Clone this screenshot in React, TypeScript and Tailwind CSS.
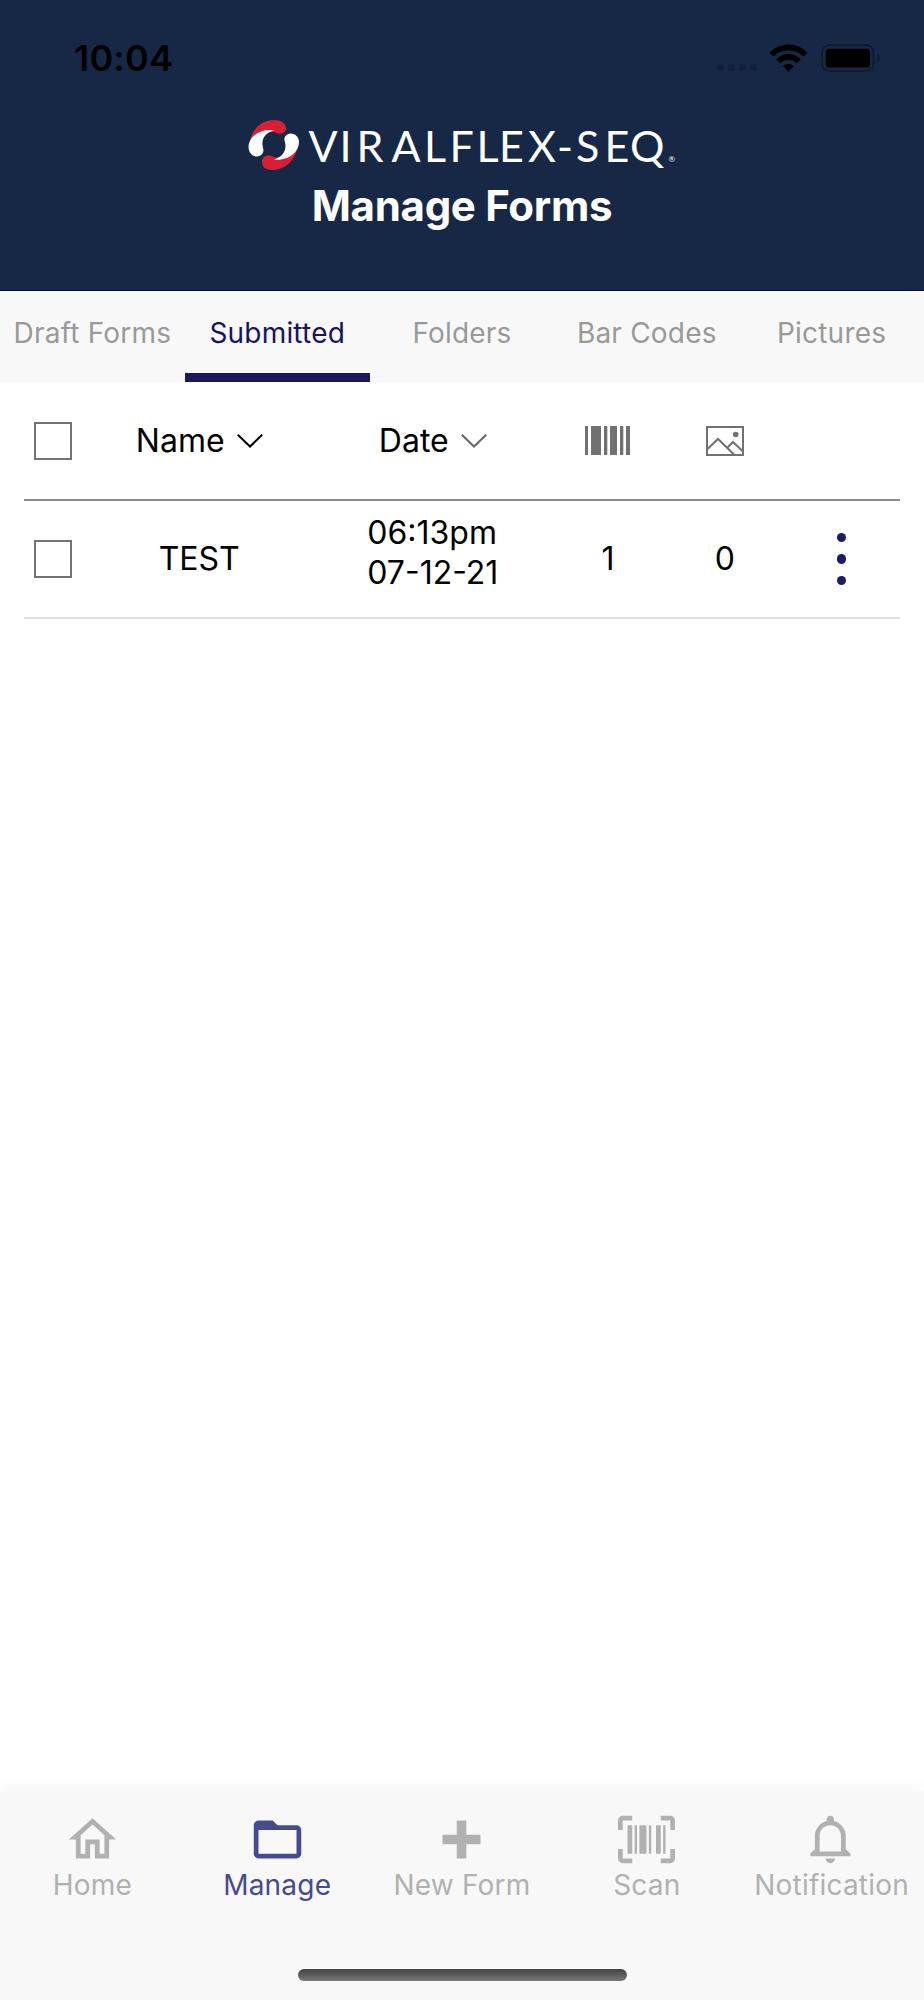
import type { ReactNode } from 'react';

const tabs = ['Draft Forms', 'Submitted', 'Folders', 'Bar Codes', 'Pictures'];
const activeTab = 'Submitted';

const forms = [{ name: 'TEST', time: '06:13pm', date: '07-12-21', barcodes: 1, pictures: 0 }];

const navItems = [
  {
    label: 'Home',
    path: 'M12 5.69l5 4.5V18h-2v-6H9v6H7v-7.81l5-4.5M12 3L2 12h3v8h6v-6h2v6h6v-8h3L12 3z',
  },
  {
    label: 'Manage',
    path: 'M20,18H4V8H20M20,6H12L10,4H4C2.89,4 2,4.89 2,6V18A2,2 0 0,0 4,20H20A2,2 0 0,0 22,18V8C22,6.89 21.1,6 20,6Z',
  },
  { label: 'New Form', path: 'M20 14H14V20H10V14H4V10H10V4H14V10H20V14Z' },
  {
    label: 'Scan',
    path: 'M4,6H6V18H4V6M7,6H8V18H7V6M9,6H12V18H9V6M13,6H14V18H13V6M16,6H18V18H16V6M19,6H20V18H19V6M2,4V8H0V4A2,2 0 0,1 2,2H6V4H2M22,2A2,2 0 0,1 24,4V8H22V4H18V2H22M2,16V20H6V22H2A2,2 0 0,1 0,20V16H2M22,20V16H24V20A2,2 0 0,1 22,22H18V20H22Z',
  },
  {
    label: 'Notification',
    path: 'M16,17H7V10.5C7,8 9,6 11.5,6C14,6 16,8 16,10.5M18,16V10.5C18,7.43 15.86,4.86 13,4.18V3.5A1.5,1.5 0 0,0 11.5,2A1.5,1.5 0 0,0 10,3.5V4.18C7.13,4.86 5,7.43 5,10.5V16L3,18V19H20V18M11.5,22A2,2 0 0,0 13.5,20H9.5A2,2 0 0,0 11.5,22Z',
  },
];
const activeNav = 'Manage';

function StatusBar() {
  return (
    <div className="flex h-[116px] items-center justify-between pr-[43px] pl-[74px] text-black">
      <span className="text-[36px] font-semibold tracking-[0.2px]">10:04</span>
      <div className="flex items-center">
        <div className="mt-[19px] mr-[12px] flex gap-[4px]">
          <span className="size-[7px] rounded-[3px] bg-[#12203b]" />
          <span className="size-[7px] rounded-[3px] bg-[#12203b]" />
          <span className="size-[7px] rounded-[3px] bg-[#12203b]" />
          <span className="size-[7px] rounded-[3px] bg-[#12203b]" />
        </div>
        <svg className="mr-[13px] h-[28px] w-[39px]" viewBox="0 0 39 28" fill="currentColor">
          <path d="M0.5 8.7C11 -2.2 28 -2.2 38.5 8.7L34.4 12.5C26 4.2 13 4.2 4.6 12.5Z" />
          <path d="M7.2 15.3C14 8.3 25 8.3 31.8 15.3L27.7 19.2C23 14.8 16 14.8 11.3 19.2Z" />
          <path d="M14 22C17 19.2 22 19.2 25 22L19.5 27.8Z" />
        </svg>
        <svg className="h-[28px] w-[60px]" viewBox="0 0 60 28">
          <rect x="1" y="1" width="51.5" height="26" rx="7.5" fill="none" stroke="#0f1b31" strokeWidth="2" />
          <rect x="4.7" y="4.8" width="44.3" height="18.8" rx="3" fill="#000" />
          <path d="M56 10C60 11 60 17 56 18Z" fill="#0f1b31" />
        </svg>
      </div>
    </div>
  );
}

function Logo() {
  return (
    <svg className="h-[52px] w-[430px]" viewBox="247 119 430 52">
      <path
        d="M250 143C251 129 262 120 274 120C281 120 286 123 286 128C286 134 279 135 274 132C265 131 256 135 250 143Z"
        fill="#d91f35"
      />
      <path
        d="M297 147C296 160 285 170 272 170C266 170 262 167 262 162C262 156 268 154 274 157C283 159 291 156 297 147Z"
        fill="#d91f35"
      />
      <path
        d="M274 130.5C264 128 249 134 248.5 147C248.5 152 252 156.500 257 156.500C262 156.500 264.500 152 263 148C261 140 264 133 274 130.500Z"
        fill="#fff"
      />
      <path
        d="M274 159.500C285 161 298.500 155 299 142C299 137 295 133.500 291 133.500C286 133.500 283 138 285 142C287 150 283 157 274 159.500Z"
        fill="#fff"
      />
      <text
        x="308.500 339.500 356.500 391.500 424 449.500 476.500 499 528 557 576 604.500 630"
        y="162.300"
        className="font-[Lato] text-[43px]"
        fill="#fff"
      >
        VIRALFLEX-SEQ
      </text>
      <text x="668.500" y="162" className="font-[Lato] text-[8px]" fill="#fff">
        ®
      </text>
    </svg>
  );
}

function ChevronIcon({ className }: { className: string }) {
  return (
    <svg className={className} width="26" height="14" viewBox="0 0 26 14" fill="none" stroke="currentColor" strokeWidth="2">
      <path d="M0.8 0.8L13 12.5L25.200 0.8" />
    </svg>
  );
}

function BarcodeIcon() {
  return (
    <svg width="45" height="29" viewBox="0 0 45 29" fill="#717171">
      <rect width="3" height="29" />
      <rect x="6" width="10" height="29" />
      <rect x="19" width="3.300" height="29" />
      <rect x="25" width="7" height="29" />
      <rect x="35" width="3.300" height="29" />
      <rect x="41" width="4" height="29" />
    </svg>
  );
}

function PictureIcon() {
  return (
    <svg width="38" height="30" viewBox="0 0 38 30" fill="none" stroke="#717171" strokeWidth="2">
      <rect x="1" y="1" width="36" height="28" />
      <path d="M1 23.500L12 13L28 28.500M21.500 21.500L27 16L37 25.500" />
      <circle cx="29.700" cy="8.500" r="2.800" fill="#717171" stroke="none" />
    </svg>
  );
}

function Checkbox() {
  return <span className="size-[38px] border-2 border-[#737373] bg-white" />;
}

function Row({ className, children }: { className: string; children: ReactNode }) {
  return (
    <div className={`grid grid-cols-[1fr_4fr_4fr_2fr_2fr_2fr] items-center justify-items-center ${className}`}>
      {children}
    </div>
  );
}

export default function App() {
  return (
    <div className="flex h-[2000px] w-[924px] flex-col overflow-hidden bg-white font-[Inter,sans-serif] text-black">
      <header className="h-[291px] shrink-0 border-b border-[#0b0b45] bg-[#172846]">
        <StatusBar />
        <div className="flex flex-col items-center pt-[3px]">
          <Logo />
          <h1 className="mt-[10px] text-[42px] leading-[50px] font-bold tracking-[-0.3px] text-white">Manage Forms</h1>
        </div>
      </header>

      <nav className="grid h-[91px] shrink-0 grid-cols-5 bg-[#f8f8f8]">
        {tabs.map((tab) => (
          <div
            key={tab}
            className={
              tab === activeTab
                ? 'flex justify-center border-b-[9px] border-[#1b185f] pt-[24px] text-[#17145c]'
                : 'flex justify-center pt-[24px] text-[#999]'
            }
          >
            <span className="text-[28px] leading-[36px] tracking-[0.2px] whitespace-nowrap">{tab}</span>
          </div>
        ))}
      </nav>

      <main className="flex-1 px-6 text-[32px]">
        <Row className="h-[119px] border-b-2 border-[#8c8c8c]">
          <Checkbox />
          <div className="flex items-center gap-3">
            <span>Name</span>
            <ChevronIcon className="text-black" />
          </div>
          <div className="flex items-center gap-3">
            <span>Date</span>
            <ChevronIcon className="text-[#666]" />
          </div>
          <BarcodeIcon />
          <PictureIcon />
        </Row>
        {forms.map((form) => (
          <Row key={form.name} className="h-[118px] border-b-2 border-[#dedfe0]">
            <Checkbox />
            <span>{form.name}</span>
            <div className="mb-3 leading-[40px]">
              <p>{form.time}</p>
              <p>{form.date}</p>
            </div>
            <span>{form.barcodes}</span>
            <span>{form.pictures}</span>
            <div className="flex flex-col gap-[12px]">
              <span className="size-[9.5px] rounded-full bg-[#1b1b6b]" />
              <span className="size-[9.5px] rounded-full bg-[#1b1b6b]" />
              <span className="size-[9.5px] rounded-full bg-[#1b1b6b]" />
            </div>
          </Row>
        ))}
      </main>

      <footer className="flex h-[209px] shrink-0 flex-col items-center bg-[#f8f8f8] shadow-[0_0_18px_rgba(0,0,0,0.06)]">
        <div className="grid w-full grid-cols-5 pt-5">
          {navItems.map(({ label, path }) => (
            <div
              key={label}
              className={
                label === activeNav
                  ? 'flex flex-col items-center text-[#454b8f]'
                  : 'flex flex-col items-center text-[#b1b1b1]'
              }
            >
              <svg className="size-[57px]" viewBox="0 0 24 24" fill="currentColor">
                <path d={path} />
              </svg>
              <span className="text-[28px] leading-[34px] tracking-[0.2px] whitespace-nowrap">{label}</span>
            </div>
          ))}
        </div>
        <div className="mt-auto mb-[19px] h-[12px] w-[329px] rounded-full bg-linear-to-b from-[#444] to-[#777]" />
      </footer>
    </div>
  );
}
